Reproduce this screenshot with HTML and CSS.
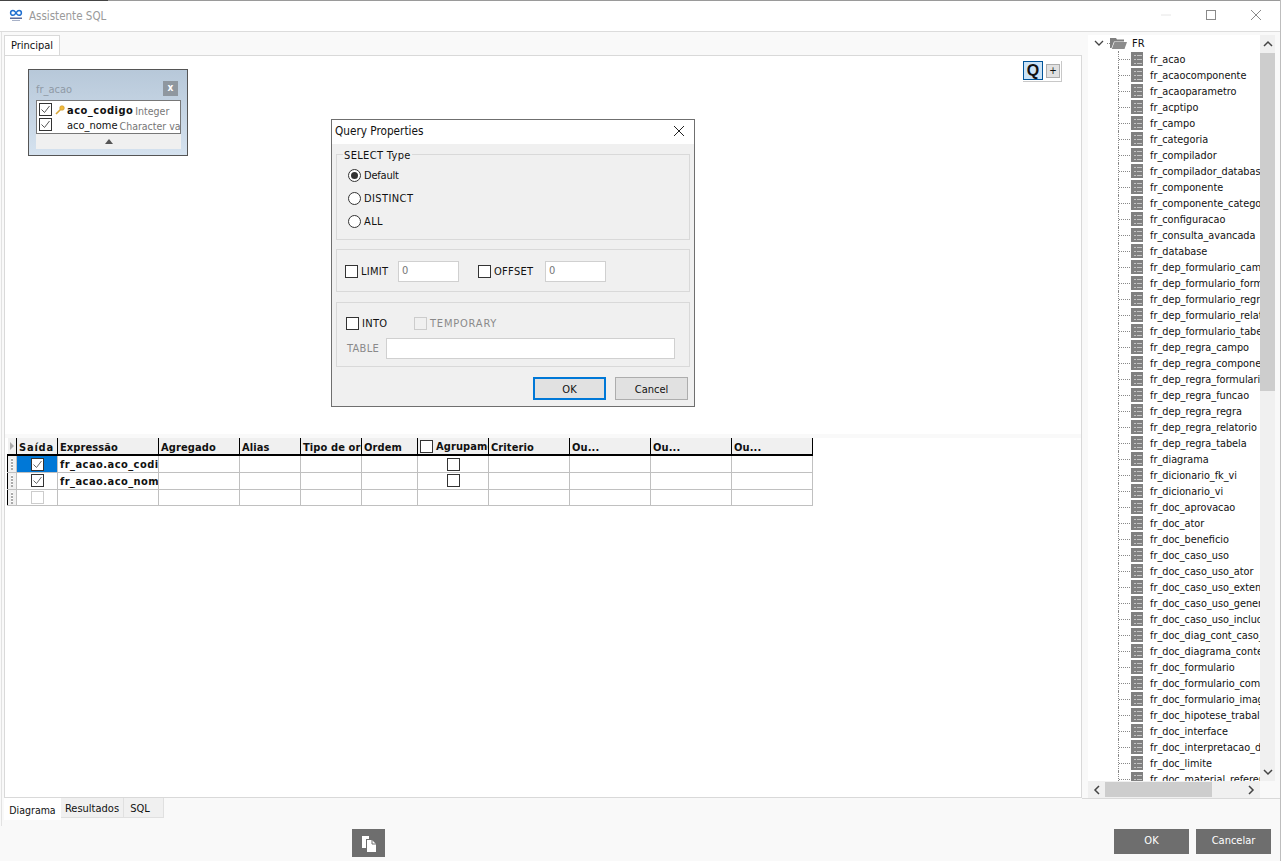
FILE: index.html
```html
<!DOCTYPE html>
<html lang="pt">
<head>
<meta charset="utf-8">
<title>Assistente SQL</title>
<link rel="stylesheet" href="styles.css">
</head>
<body>
<div class="app">
  <header class="titlebar">
    <svg class="logo" viewBox="0 0 14 14" width="14" height="14"><path d="M4 2.500a2.400 2.400 0 1 0 0 4.800c1.500 0 2-1 3-2.400s1.500-2.400 3-2.400a2.400 2.400 0 1 1 0 4.800c-1.500 0-2-1-3-2.400S5.500 2.500 4 2.500z" fill="none" stroke="#1f6fd0" stroke-width="1.500"/><rect x="1" y="9.500" width="12" height="1.500" fill="#5a6a9a"/><rect x="3" y="12" width="8" height="1" fill="#a8b2c8"/></svg>
    <span class="title">Assistente SQL</span>
    <div class="winbtns">
      <svg width="12" height="12" viewBox="0 0 12 12"><path d="M1 6h10" stroke="#e6e6e6"/></svg>
      <svg width="12" height="12" viewBox="0 0 12 12"><rect x="1.500" y="1.500" width="9" height="9" fill="none" stroke="#8a8a8a"/></svg>
      <svg width="12" height="12" viewBox="0 0 12 12"><path d="M1 1l10 10M11 1L1 11" stroke="#8a8a8a" fill="none"/></svg>
    </div>
  </header>

  <main class="main">
    <section class="left">
      <div class="toptabs"><div class="tab active">Principal</div></div>
      <div class="canvas">
        <div class="diagram">
          <div class="tablecard">
            <div class="cardhead"><span>fr_acao</span><b class="cardx">x</b></div>
            <div class="cardfields">
              <div class="field"><span class="chk on"><svg width="11" height="11" viewBox="0 0 11 11"><path d="M1.500 5.500l3 3 5-6.500" fill="none" stroke="#555"/></svg></span><svg class="key" width="10" height="10" viewBox="0 0 10 10"><circle cx="7" cy="3" r="2.300" fill="#f0b93a" stroke="#c8962a" stroke-width=".6"/><path d="M5.500 4.500L1 9" stroke="#d9a635" stroke-width="1.600"/></svg><b class="fn">aco_codigo</b> <i class="fn">Integer</i></div>
              <div class="field"><span class="chk on"><svg width="11" height="11" viewBox="0 0 11 11"><path d="M1.500 5.500l3 3 5-6.500" fill="none" stroke="#555"/></svg></span><span class="nokey"></span><span class="fn">aco_nome</span> <i class="fn">Character varying</i></div>
            </div>
            <div class="cardfoot"><span class="uptri"></span></div>
          </div>
          <div class="qbtns">
            <span class="qbtn">Q</span><span class="plus">+</span>
          </div>
        </div>
        <div class="splitter"></div>
        <table class="grid">
          <colgroup><col class="c0"><col class="c1"><col class="c2"><col class="c3"><col class="c4"><col class="c5"><col class="c6"><col class="c7"><col class="c8"><col class="c9"><col class="c9"><col class="c9"></colgroup>
          <thead>
            <tr><th class="ind"><span class="rtri"></span></th><th class="said">Saída</th><th>Expressão</th><th>Agregado</th><th>Alias</th><th>Tipo de ordem</th><th>Ordem</th><th><span class="hwrap"><span class="chk hchk"></span>Agrupamento</span></th><th>Criterio</th><th>Ou...</th><th>Ou...</th><th>Ou...</th></tr>
          </thead>
          <tbody>
            <tr><td class="ind"></td><td class="sel"><span class="chk on"><svg width="11" height="11" viewBox="0 0 11 11"><path d="M1.500 5.500l3 3 5-6.500" fill="none" stroke="#666"/></svg></span></td><td class="expr">fr_acao.aco_codigo</td><td></td><td></td><td></td><td></td><td class="mid"><span class="chk"></span></td><td></td><td></td><td></td><td></td></tr>
            <tr><td class="ind"></td><td class="mid"><span class="chk on"><svg width="11" height="11" viewBox="0 0 11 11"><path d="M1.500 5.500l3 3 5-6.500" fill="none" stroke="#666"/></svg></span></td><td class="expr">fr_acao.aco_nome</td><td></td><td></td><td></td><td></td><td class="mid"><span class="chk"></span></td><td></td><td></td><td></td><td></td></tr>
            <tr><td class="ind"></td><td class="mid"><span class="chk off"></span></td><td></td><td></td><td></td><td></td><td></td><td></td><td></td><td></td><td></td><td></td></tr>
          </tbody>
        </table>
      </div>
      <div class="bottabs">
        <div class="btab active">Diagrama</div><div class="btab res">Resultados</div><div class="btab sq">SQL</div>
      </div>
    </section>

    <aside class="right">
      <div class="treewrap">
        <div class="tree">
          <div class="root"><svg class="chev" width="10" height="7" viewBox="0 0 10 7"><path d="M1 1l4 4 4-4" fill="none" stroke="#444" stroke-width="1.300"/></svg><span class="dotsh"></span><svg class="folder" width="17" height="12" viewBox="0 0 17 12"><path d="M0 1h6l1 1.500h7v2H4L1.500 11H0z" fill="#7f7f7f"/><path d="M4.500 5H17l-2.500 7H1.800z" fill="#8c8c8c"/></svg><span>FR</span></div>
          <ul class="items">
            <li>fr_acao</li><li>fr_acaocomponente</li><li>fr_acaoparametro</li><li>fr_acptipo</li><li>fr_campo</li><li>fr_categoria</li><li>fr_compilador</li><li>fr_compilador_database</li><li>fr_componente</li><li>fr_componente_categoria</li><li>fr_configuracao</li><li>fr_consulta_avancada</li><li>fr_database</li><li>fr_dep_formulario_campo</li><li>fr_dep_formulario_formulario</li><li>fr_dep_formulario_regra</li><li>fr_dep_formulario_relatorio</li><li>fr_dep_formulario_tabela</li><li>fr_dep_regra_campo</li><li>fr_dep_regra_componente</li><li>fr_dep_regra_formulario</li><li>fr_dep_regra_funcao</li><li>fr_dep_regra_regra</li><li>fr_dep_regra_relatorio</li><li>fr_dep_regra_tabela</li><li>fr_diagrama</li><li>fr_dicionario_fk_vi</li><li>fr_dicionario_vi</li><li>fr_doc_aprovacao</li><li>fr_doc_ator</li><li>fr_doc_beneficio</li><li>fr_doc_caso_uso</li><li>fr_doc_caso_uso_ator</li><li>fr_doc_caso_uso_extend</li><li>fr_doc_caso_uso_generalizacao</li><li>fr_doc_caso_uso_include</li><li>fr_doc_diag_cont_caso_uso</li><li>fr_doc_diagrama_contexto</li><li>fr_doc_formulario</li><li>fr_doc_formulario_comando</li><li>fr_doc_formulario_imagem</li><li>fr_doc_hipotese_trabalho</li><li>fr_doc_interface</li><li>fr_doc_interpretacao_dados</li><li>fr_doc_limite</li><li>fr_doc_material_referencia</li>
          </ul>
        </div>
        <div class="vscroll">
          <svg width="10" height="7" viewBox="0 0 10 7"><path d="M1 6l4-4 4 4" fill="none" stroke="#444" stroke-width="1.500"/></svg>
          <div class="vtrack"><div class="vthumb"></div></div>
          <svg width="10" height="7" viewBox="0 0 10 7"><path d="M1 1l4 4 4-4" fill="none" stroke="#444" stroke-width="1.500"/></svg>
        </div>
      </div>
      <div class="hscroll">
        <div class="hbar">
          <svg width="7" height="10" viewBox="0 0 7 10"><path d="M6 1L2 5l4 4" fill="none" stroke="#444" stroke-width="1.500"/></svg>
          <div class="htrack"><div class="hthumb"></div></div>
          <svg width="7" height="10" viewBox="0 0 7 10"><path d="M1 1l4 4-4 4" fill="none" stroke="#444" stroke-width="1.500"/></svg>
        </div>
      </div>
    </aside>
  </main>

  <footer class="footer">
    <button class="flatbtn paste"><svg width="16" height="17" viewBox="0 0 16 17"><path d="M1 1h7v3H5v9H1z" fill="#fff"/><path d="M6 5h5l4 4v8H6z" fill="#fff"/><path d="M11 5v4h4" fill="none" stroke="#6e6e6e"/></svg></button>
    <div class="footbtns">
      <button class="flatbtn act">OK</button>
      <button class="flatbtn act">Cancelar</button>
    </div>
  </footer>

  <div class="dialog">
    <div class="dlgtitle"><span>Query Properties</span><svg width="12" height="12" viewBox="0 0 12 12"><path d="M1 1l10 10M11 1L1 11" stroke="#222" fill="none"/></svg></div>
    <div class="dlgbody">
      <fieldset class="group g1">
        <legend>SELECT Type</legend>
        <label class="radio first"><span class="rd on"></span>Default</label>
        <label class="radio up"><span class="rd"></span>DISTINCT</label>
        <label class="radio up"><span class="rd"></span>ALL</label>
      </fieldset>
      <div class="group g2">
        <span class="chk"></span><span class="lbl w1">LIMIT</span><span class="inp">0</span>
        <span class="chk c2nd"></span><span class="lbl w2">OFFSET</span><span class="inp">0</span>
      </div>
      <div class="group g3">
        <div class="g3row"><span class="chk"></span><span class="lbl w3">INTO</span><span class="chk dis"></span><span class="lbl mute temp">TEMPORARY</span></div>
        <div class="g3row2"><span class="lbl mute w4">TABLE</span><span class="inp wide"></span></div>
      </div>
      <div class="dlgbtns"><button class="wbtn def">OK</button><button class="wbtn">Cancel</button></div>
    </div>
  </div>
</div>
</body>
</html>
```

FILE: styles.css
```css
* { box-sizing: border-box; }
html, body { margin: 0; padding: 0; }
body { width: 1281px; height: 861px; overflow: hidden; background: #f9f9f9; font: 11px "DejaVu Sans Condensed", "DejaVu Sans", sans-serif; color: #111; }
.app { position: relative; width: 1281px; height: 861px; display: flex; flex-direction: column; border-right: 1px solid #bdbdbd; }
.titlebar { height: 32px; flex: none; background: linear-gradient(#444, #444) 0 0 / 108px 1px no-repeat, linear-gradient(#9a9a9a, #9a9a9a) 0 0 / 100% 1px no-repeat, #fff; border-bottom: 1px solid #dcdcdc; display: flex; align-items: center; padding: 0 18px 2px 9px; gap: 6px; }
.title { color: #9a9a9a; font-size: 11.500px; padding-top: 2px; }
.logo { flex: none; }
.winbtns { margin-left: auto; display: flex; gap: 33px; align-items: center; }
.main { flex: 1; display: flex; min-height: 0; padding-left: 1px; }
.left { width: 1081px; flex: none; display: flex; flex-direction: column; border-left: 1px solid #e2e2e2; padding-left: 2px; }
.toptabs { height: 23px; padding-top: 3px; display: flex; flex: none; }
.tab { width: 56px; height: 20px; background: #fff; border: 1px solid #d9d9d9; border-bottom: 0; text-align: center; line-height: 19px; }
.canvas { height: 743px; flex: none; background: #fff; border: 1px solid #d9d9d9; display: flex; flex-direction: column; }
.diagram { position: relative; height: 378px; flex: none; }
.splitter { height: 4px; background: #f9f9f9; flex: none; }
.tablecard { position: absolute; left: 23px; top: 13px; width: 160px; height: 87px; border: 1px solid #555; background: linear-gradient(#b7c8d9, #d5e2ef); padding: 0 6px 6px 7px; display: flex; flex-direction: column; }
.cardhead { height: 30px; flex: none; display: flex; align-items: center; justify-content: space-between; color: #8f9aa6; padding: 8px 3px 0 0; }
.cardx { width: 15px; height: 15px; background: #8f979f; color: #fff; font-size: 10px; line-height: 13px; text-align: center; margin-top: -2px; }
.cardfields { height: 34px; flex: none; border: 1px solid #777; background: #fff; padding: 1px 0 0 2px; overflow: hidden; }
.field { height: 15px; white-space: nowrap; display: flex; align-items: center; gap: 3px; overflow: hidden; }
.field .fn { padding-top: 2px; }
.field b { letter-spacing: .5px; margin-left: -1px; }
.field i { font-style: normal; color: #777; margin-left: -1px; font-size: 10.500px; }
.key { flex: none; }
.nokey { width: 9px; flex: none; }
.cardfoot { flex: 1; background: #f0f0f0; display: flex; align-items: center; justify-content: center; }
.uptri { width: 0; height: 0; border: 4px solid transparent; border-top: 0; border-bottom: 5px solid #555; }
.qbtns { position: absolute; left: 1018px; top: 5px; width: 39px; height: 21px; border-right: 1px solid #c8c8c8; border-bottom: 1px solid #c8c8c8; display: flex; align-items: flex-start; gap: 3px; }
.qbtn { width: 20px; height: 19px; background: #cce4f7; border: 1px solid #005499; font: bold 16px/17px "Liberation Sans", Arial, sans-serif; text-align: center; color: #111; }
.plus { width: 14px; height: 14px; margin-top: 3px; background: #e1e1e1; border: 1px solid #adadad; font-size: 10px; line-height: 12px; text-align: center; }
.chk { display: inline-block; flex: none; width: 13px; height: 13px; border: 1px solid #333; background: #fff; vertical-align: middle; position: relative; line-height: 0; }
.chk svg { display: block; }
.chk.off { border-color: #ccc; }
.chk.dis { border-color: #ccc; background: #f0f0f0; }
.grid { border-collapse: collapse; table-layout: fixed; width: 805px; margin-left: 2px; flex: none; }
.c0 { width: 9px; } .c1 { width: 41px; } .c2 { width: 101px; } .c3 { width: 81px; } .c4 { width: 61px; } .c5 { width: 61px; } .c6 { width: 56px; } .c7 { width: 71px; } .c8 { width: 81px; } .c9 { width: 81px; }
.grid th { height: 17px; background: #f0f0f0; border-left: 1px solid #000; border-bottom: 2px solid #000; font-weight: bold; text-align: left; padding: 2px 0 0 2px; overflow: hidden; white-space: nowrap; letter-spacing: .1px; }
.grid th:last-child { border-right: 1px solid #000; }
.grid th.said { letter-spacing: .8px; }
.grid th.ind { border-left: 0; padding: 0 0 0 2px; }
.rtri { display: inline-block; width: 0; height: 0; border: 4px solid transparent; border-right: 0; border-left: 4px solid #aaa; }
.hwrap { display: block; overflow: hidden; }
.hchk { margin: 0 3px 1px 0; }
.grid td { height: 17px; padding: 0; border: 1px solid #c0c0c0; border-top: 0; overflow: hidden; white-space: nowrap; }
.grid tbody tr:last-child td { height: 16px; }
.grid td.ind { border-left: 1px solid #000; background: repeating-linear-gradient(#fff 0, #fff 1px, #aaa 1px, #aaa 3px) 3px 2px / 2px 12px no-repeat, #f0f0f0; }
.grid td.expr { font-weight: bold; padding: 1px 0 0 2px; letter-spacing: .45px; }
.grid td.mid, .grid td.sel { text-align: center; }
.grid td.sel { background: #0078d7; }
.bottabs { height: 20px; flex: none; display: flex; align-items: flex-start; }
.btab { height: 20px; background: #f0f0f0; border: 1px solid #e0e0e0; border-top: 0; border-left: 0; line-height: 21px; text-align: center; }
.btab.res { width: 63px; }
.btab.sq { width: 40px; padding-right: 7px; }
.btab.active { height: 22px; width: 57px; background: #fff; padding-top: 2px; border: 0; font-size: 10.500px; }
.right { flex: 1; display: flex; flex-direction: column; padding: 3px 5px 0 6px; min-width: 0; }
.treewrap { height: 746px; flex: none; display: flex; background: #fff; }
.tree { flex: 1; min-width: 0; overflow: hidden; background: #fff; }
.root { height: 16px; display: flex; align-items: center; padding-left: 6px; }
.chev { flex: none; margin-right: 3px; }
.dotsh { width: 3px; border-top: 1px dotted #888; }
.folder { flex: none; margin-right: 5px; }
.items { list-style: none; margin: 0; padding: 0; }
.items li { height: 16px; line-height: 16px; padding: 1px 0 0 62px; font-size: 10.800px; white-space: nowrap; position: relative; background:
  repeating-linear-gradient(#c4c4c4 0 1px, transparent 1px 4px) 49px 4px / 5px 9px no-repeat,
  repeating-linear-gradient(#c4c4c4 0 1px, transparent 1px 4px) 46px 4px / 2px 9px no-repeat,
  linear-gradient(#808080, #808080) 43px 1px / 12px 14px no-repeat; }
.items li::before { content: ""; position: absolute; left: 30px; top: 0; bottom: 0; border-left: 1px dotted #888; }
.items li::after { content: ""; position: absolute; left: 31px; top: 8px; width: 11px; border-top: 1px dotted #888; }
.vscroll { width: 15px; flex: none; background: #f0f0f0; display: flex; flex-direction: column; align-items: center; justify-content: space-between; padding: 5px 0; }
.vtrack { flex: 1; width: 15px; margin: 6px 0; }
.vthumb { height: 338px; background: #cdcdcd; }
.hscroll { height: 18px; flex: none; border-bottom: 1px solid #d9d9d9; margin: 0 -5px 0 -6px; padding: 0 20px 0 6px; }
.hbar { height: 17px; background: #f0f0f0; display: flex; align-items: center; padding: 0 5px; }
.htrack { flex: 1; height: 15px; margin: 0 5px; }
.hthumb { width: 107px; height: 15px; background: #cdcdcd; }
.footer { height: 40px; flex: none; display: flex; align-items: flex-start; justify-content: space-between; padding: 7px 9px 0 352px; margin-top: -5px; }
.flatbtn { border: 0; background: #6e6e6e; color: #fff; font: 11px "DejaVu Sans Condensed", "DejaVu Sans", sans-serif; padding: 0 0 2px; }
.paste { width: 33px; height: 28px; display: flex; align-items: center; justify-content: center; margin-top: 1px; padding: 0; }
.footbtns { display: flex; gap: 7px; margin-top: 1px; }
.act { width: 75px; height: 25px; }
.dialog { position: absolute; left: 331px; top: 119px; width: 364px; height: 288px; background: #f0f0f0; border: 1px solid #6f6f6f; display: flex; flex-direction: column; }
.dlgtitle { height: 24px; flex: none; background: #fff; display: flex; align-items: center; justify-content: space-between; padding: 0 9px 2px 3px; font-size: 11.700px; }
.dlgbody { flex: 1; padding: 3px 4px 0 4px; display: flex; flex-direction: column; }
.group { border: 1px solid #d9d9d9; margin: 0; padding: 0; min-width: 0; }
.g1 { height: 93px; padding: 3px 0 0 11px; }
.g1 legend { padding: 0 1px; margin-left: -5px; height: 14px; line-height: 17px; letter-spacing: .35px; }
.radio { display: flex; align-items: center; height: 23px; gap: 3px; }
.radio.first { letter-spacing: -.2px; }
.radio.up { letter-spacing: .4px; }
.rd { width: 13px; height: 13px; border: 1px solid #333; border-radius: 50%; background: #fff; flex: none; position: relative; }
.rd.on::after { content: ""; position: absolute; left: 2px; top: 2px; width: 7px; height: 7px; border-radius: 50%; background: #333; }
.g2 { height: 43px; margin-top: 9px; display: flex; align-items: center; padding: 1px 0 0 8px; }
.lbl { margin-left: 3px; letter-spacing: .3px; }
.mute { color: #8a8a8a; }
.temp { letter-spacing: .8px; }
.w1 { width: 37px; }
.w2 { width: 51px; }
.inp { height: 21px; width: 61px; background: #fff; border: 1px solid #d0d0d0; color: #777; padding-left: 3px; line-height: 17px; display: block; letter-spacing: 0; }
.c2nd { margin-left: 19px; }
.g3 { height: 65px; margin-top: 10px; padding: 7px 0 0 9px; }
.g3row { display: flex; align-items: center; height: 26px; }
.w3 { width: 52px; }
.g3row2 { display: flex; align-items: center; height: 22px; margin-top: 1px; }
.w4 { width: 39px; margin-left: 1px; }
.inp.wide { width: 289px; }
.dlgbtns { display: flex; justify-content: flex-end; gap: 9px; margin-top: 10px; padding-right: 2px; }
.wbtn { width: 73px; height: 23px; background: #e1e1e1; border: 1px solid #adadad; font: 11px "DejaVu Sans Condensed", "DejaVu Sans", sans-serif; padding: 1px 0 0; color: #111; }
.wbtn.def { border: 2px solid #0078d7; }
```
